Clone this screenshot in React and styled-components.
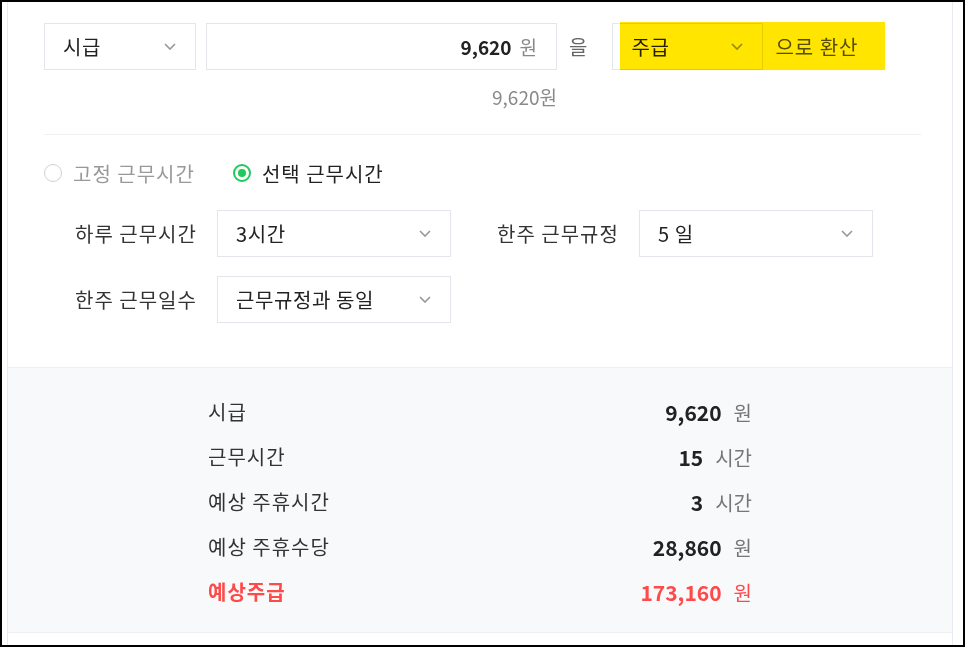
import React from 'react';
import styled, { createGlobalStyle } from 'styled-components';

const GlobalStyle = createGlobalStyle`
  html, body { margin: 0; padding: 0; background: #fff; }
  body {
    font-family: "Noto Sans CJK KR", "Noto Sans", sans-serif;
    color: #222;
  }
  * { box-sizing: border-box; }
`;

const Frame = styled.div`
  width: 965px;
  height: 647px;
  border: 2px solid #000;
  padding: 0 10px 0 5px;
  overflow: hidden;
`;

const Card = styled.div`
  height: 100%;
  border-left: 1px solid #e8ebef;
  border-right: 1px solid #e8ebef;
`;

const Form = styled.div`
  padding: 21px 31px 44px 36px;
`;

const TopRow = styled.div`
  position: relative;
  display: flex;
  align-items: center;
  height: 47px;
`;

const Box = styled.div`
  display: flex;
  align-items: center;
  width: ${p => p.$w}px;
  height: 47px;
  margin-left: ${p => p.$ml || 0}px;
  padding: 0 19px 0 18px;
  border: 1px solid #e3e7ec;
  background: #fff;
  font-size: 20px;
  letter-spacing: 0.6px;
  color: #222;
  justify-content: ${p => (p.$right ? 'flex-end' : 'space-between')};
`;

const Chevron = () => (
  <svg width="12" height="7" viewBox="0 0 12 7">
    <polyline points="1,1 6,6 11,1" fill="none" stroke="#9a9a9a" strokeWidth="1.7" />
  </svg>
);

const Amount = styled.b`
  font-weight: 700;
  font-size: 19px;
  letter-spacing: 0;
  color: #222;
`;

const Won = styled.span`
  margin-left: 8px;
  color: #888;
  font-size: 19px;
  letter-spacing: 0;
`;

const Word = styled.span`
  margin: 0 ${p => p.$mr || 0}px 0 ${p => p.$ml || 0}px;
  font-size: 20px;
  letter-spacing: 1px;
  color: ${p => p.$c || '#666'};
`;

const Highlight = styled.div`
  position: absolute;
  left: 576px;
  top: -1px;
  width: 265px;
  height: 48px;
  background: #ffe500;
  mix-blend-mode: multiply;
  pointer-events: none;
`;

const Help = styled.div`
  width: 513px;
  margin-top: 15px;
  line-height: 24px;
  text-align: right;
  font-size: 19px;
  color: #8a8a8a;
`;

const Divider = styled.div`
  height: 1px;
  margin-top: 25px;
  background: #eef0f3;
`;

const RadioRow = styled.div`
  display: flex;
  align-items: center;
  gap: 38px;
  height: 26px;
  margin-top: 25px;
`;

const Option = styled.label`
  display: flex;
  align-items: center;
  gap: 11px;
  font-size: 20px;
  letter-spacing: 1px;
  color: ${p => (p.$on ? '#222' : '#999')};
`;

const Dot = styled.span`
  position: relative;
  width: 18px;
  height: 18px;
  border-radius: 50%;
  border: ${p => (p.$on ? '2px solid #1fc95b' : '1px solid #d0d0d0')};
  background: #fff;
  &::after {
    content: '';
    display: ${p => (p.$on ? 'block' : 'none')};
    position: absolute;
    left: 3px;
    top: 3px;
    width: 8px;
    height: 8px;
    border-radius: 50%;
    background: #1fc95b;
  }
`;

const Fields = styled.div`
  display: grid;
  grid-template-columns: 376px 376px;
  column-gap: 46px;
  row-gap: 19px;
  margin: 24px 0 0 31px;
`;

const Field = styled.div`
  display: flex;
  align-items: center;
`;

const Label = styled.span`
  width: 142px;
  font-size: 20px;
  letter-spacing: 1px;
  color: #333;
`;

const Summary = styled.div`
  padding: 21px 0 18px;
  background: #f8f9fb;
  border-top: 1px solid #eef0f3;
  border-bottom: 1px solid #eef0f3;
`;

const List = styled.div`
  width: 544px;
  margin-left: 200px;
`;

const Line = styled.div`
  display: flex;
  align-items: center;
  justify-content: space-between;
  height: 45px;
  font-size: 20px;
  letter-spacing: 1px;
  color: ${p => (p.$red ? '#ff4a4a' : '#333')};
  font-weight: ${p => (p.$red ? 700 : 400)};
`;

const Value = styled.span`
  display: flex;
  align-items: baseline;
  letter-spacing: 0;
`;

const Num = styled.b`
  font-size: 21px;
  font-weight: 700;
  color: ${p => (p.$red ? '#ff4a4a' : '#222')};
`;

const Unit = styled.span`
  margin-left: 12px;
  font-size: 20px;
  font-weight: 400;
  color: ${p => (p.$red ? '#ff4a4a' : '#777')};
`;

const rows = [
  ['시급', '9,620', '원'],
  ['근무시간', '15', '시간'],
  ['예상 주휴시간', '3', '시간'],
  ['예상 주휴수당', '28,860', '원'],
  ['예상주급', '173,160', '원', true],
];

export default function App() {
  return (
    <>
      <GlobalStyle />
      <Frame>
        <Card>
          <Form>
            <TopRow>
              <Box $w={152}>시급<Chevron /></Box>
              <Box $w={351} $ml={10} $right>
                <Amount>9,620</Amount>
                <Won>원</Won>
              </Box>
              <Word $ml={12} $mr={24}>을</Word>
              <Box $w={151}>주급<Chevron /></Box>
              <Word $ml={12} $c="#555">으로 환산</Word>
              <Highlight />
            </TopRow>
            <Help>9,620원</Help>
            <Divider />
            <RadioRow>
              <Option><Dot />고정 근무시간</Option>
              <Option $on><Dot $on />선택 근무시간</Option>
            </RadioRow>
            <Fields>
              <Field>
                <Label>하루 근무시간</Label>
                <Box $w={234}>3시간<Chevron /></Box>
              </Field>
              <Field>
                <Label>한주 근무규정</Label>
                <Box $w={234}>5 일<Chevron /></Box>
              </Field>
              <Field>
                <Label>한주 근무일수</Label>
                <Box $w={234}>근무규정과 동일<Chevron /></Box>
              </Field>
            </Fields>
          </Form>
          <Summary>
            <List>
              {rows.map(([label, num, unit, red]) => (
                <Line key={label} $red={red}>
                  <span>{label}</span>
                  <Value>
                    <Num $red={red}>{num}</Num>
                    <Unit $red={red}>{unit}</Unit>
                  </Value>
                </Line>
              ))}
            </List>
          </Summary>
        </Card>
      </Frame>
    </>
  );
}
